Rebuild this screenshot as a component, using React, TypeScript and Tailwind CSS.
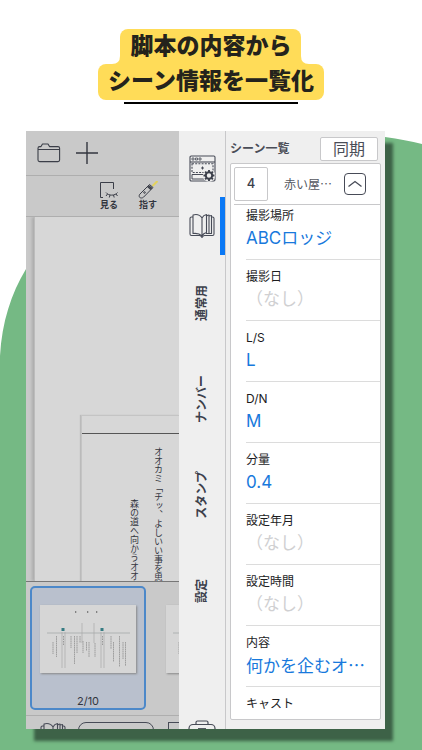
import React from "react";

type Scene = { label: string; value?: string };

const scenes: Scene[] = [
  { label: "撮影場所", value: "ABCロッジ" },
  { label: "撮影日" },
  { label: "L/S", value: "L" },
  { label: "D/N", value: "M" },
  { label: "分量", value: "0.4" },
  { label: "設定年月" },
  { label: "設定時間" },
  { label: "内容", value: "何かを企むオ…" },
];

const tabs = ["通常用", "ナンバー", "スタンプ", "設定"];

function Blob() {
  return (
    <svg
      className="absolute inset-0 h-full w-full"
      viewBox="0 0 422 750"
      preserveAspectRatio="none"
      aria-hidden="true"
    >
      <path
        d="M0 356C2 322 11 294 26 269C50 228 80 200 130 175C230 128 330 126 385 137C399 139 411 141 422 144V750H0Z"
        fill="#75b984"
      />
    </svg>
  );
}

function FolderIcon() {
  return (
    <svg width="24" height="20" viewBox="0 0 24 20" fill="none" stroke="#3b3e48" strokeWidth="1.1" strokeLinejoin="round">
      <path d="M1 6.500V17a1.600 1.600 0 0 0 1.600 1.600H21a1.600 1.600 0 0 0 1.600-1.600V5.200A1.600 1.600 0 0 0 21 3.600H12.500L11 1H5.500L4 3.600H2.600A1.600 1.600 0 0 0 1 5.200V6.500H22.600" />
    </svg>
  );
}

function PlusIcon() {
  return (
    <svg width="22" height="22" viewBox="0 0 22 22" stroke="#33363f" strokeWidth="1.400">
      <path d="M0 11H22M11 0V22" />
    </svg>
  );
}

function LookIcon() {
  return (
    <svg width="20" height="18" viewBox="0 0 20 18" fill="none" stroke="#3b3e48" strokeWidth="1">
      <path d="M4 16.500H1.500V1.500H14.500V8" />
      <path d="M7 11.500C9.500 15 16 15 18.500 11.500M8.500 13L7 15M11 14L10.300 16.500M14.500 14L15.200 16.500M17 13L18.500 15" />
    </svg>
  );
}

function PointerIcon() {
  return (
    <svg width="20" height="18" viewBox="0 0 20 18" fill="none" stroke="#3b3e48" strokeWidth="1">
      <path d="M14.500 5L19.500 0" stroke="#e3d25c" strokeWidth="2" />
      <path d="M11.500 3.500L15 6.500L5.500 16.200C4.500 17.200 2.500 17.200 1.700 16.400C.9 15.500 1 14 2 13Z" />
      <path d="M9.500 5.500L13 8.500M10.500 4.500L14 7.500" strokeWidth="1.300" />
      <circle cx="6.500" cy="11.500" r=".8" />
    </svg>
  );
}

function WindowGearIcon() {
  return (
    <svg width="27" height="27" viewBox="0 0 27 27" fill="none" stroke="#474b57" strokeWidth="1.100">
      <rect x="1" y="1" width="25" height="25" rx="1.200" />
      <path d="M1 7H26" />
      <path d="M3 3h2v2h-2zM6.500 3h2v2h-2zM10 3h2v2h-2z" strokeWidth=".8" />
      <path d="M3 8.800H24V17.500H3Z" strokeDasharray="2 1.200" />
      <path d="M13.500 11.500V14.500M12 13H15" strokeWidth="1" />
      <path d="M3 19.500H14M3 19.500V24H15" strokeWidth="1" />
      <circle cx="20" cy="20.500" r="6.200" fill="#efefef" stroke="none" />
      <circle cx="20" cy="20.500" r="3.200" strokeWidth="2" stroke="#3c404b" />
      <path
        d="M20 15V17M20 24V26M14.500 20.500H16.500M23.500 20.500H25.500M16.100 16.600L17.500 18M22.500 23L23.900 24.400M16.100 24.400L17.500 23M22.500 18L23.900 16.600"
        strokeWidth="1.900"
        stroke="#3c404b"
      />
    </svg>
  );
}

function BookIcon() {
  return (
    <svg
      className="shrink-0"
      width="26"
      height="26"
      viewBox="0 0 26 26"
      fill="none"
      stroke="#474b57"
      strokeWidth="1.100"
      strokeLinejoin="round"
    >
      <path d="M4 4H2.500Q1 4 1 5.500V21Q1 22.500 2.500 22.500H10.500Q12 22.500 13 24.500Q14 22.500 15.500 22.500H23.500Q25 22.500 25 21V5.500Q25 4 23.500 4H22.500" />
      <path d="M13 5C11 2 7.500 1 4 2V20.500C7.500 20 10.500 20.500 13 23V5C14 3 15 2 17.500 1.500V19.500C15.500 20 14 21 13 23" />
      <path d="M17.500 3Q19 2 20 2V20.500H17M20 3Q21.500 2.500 22.500 2.500V20.500H20" />
    </svg>
  );
}

function CaseIcon() {
  return (
    <svg width="28" height="24" viewBox="0 0 28 24" fill="none" stroke="#474b57" strokeWidth="1.200">
      <path d="M8 4.500V2.500Q8 1 9.500 1H18.500Q20 1 20 2.500V4.500" />
      <rect x="1" y="4.500" width="26" height="18" rx="4" />
      <path d="M10 9H18" strokeWidth="1.800" />
    </svg>
  );
}

function ScriptThumb() {
  return (
    <svg className="block h-[68px] w-24 shrink-0 bg-[#d6d6d6] shadow-[1px_1px_2px_#888]" viewBox="0 0 96 68" fill="none">
      <path d="M7 28H90" stroke="#a5a9a9" strokeWidth=".8" />
      <path d="M35 7h1.300M47 7h1.300M56 7h1.300" stroke="#666" strokeWidth="1.300" />
      <path d="M42 18V38M54 18V38M22 27V63M25 27V63M61 27V63M64 27V63" stroke="#aaa" strokeWidth=".7" />
      <path d="M23.500 31V41M62.500 31V41" stroke="#999" strokeDasharray="1.500 1" />
      <path
        d="M13 37V49M16.500 31V52M31 31V43M34.500 31V59M37 31V48M40 31V38M43 36V48M46.500 37V46M49 37V52M55 38V52M71 31V44M73.500 37V57M79.500 31V62M83 37V54M85.500 37V61"
        stroke="#909090"
        strokeWidth=".8"
        strokeDasharray="1.700 .5"
      />
      <path d="M21.500 23h3v3h-3zM60.500 23h3v3h-3z" fill="#357b82" />
    </svg>
  );
}

function Title() {
  return (
    <header className="relative flex flex-col items-center pt-[29px] text-[23px] leading-[35px] font-black text-[#24231c]">
      <h1 className="flex flex-col items-center">
        <span className="flex items-end">
          <svg width="8" height="8" viewBox="0 0 8 8" aria-hidden="true">
            <path d="M8 0V8H0Q8 8 8 0Z" fill="#ffdc58" />
          </svg>
          <span className="rounded-t-lg bg-[#ffdc58] px-[10px]">脚本の内容から</span>
          <svg width="8" height="8" viewBox="0 0 8 8" aria-hidden="true">
            <path d="M0 0V8H8Q0 8 0 0Z" fill="#ffdc58" />
          </svg>
        </span>
        <span className="rounded-lg bg-[#ffdc58] px-[10px] pb-px">シーン情報を一覧化</span>
      </h1>
      <div className="mt-[2px] h-[2px] w-[174px] bg-black" />
    </header>
  );
}

function Editor() {
  return (
    <section className="flex w-[153px] shrink-0 flex-col overflow-hidden bg-[#c9c9c9] text-[#33363f]">
      <div className="flex h-[45px] shrink-0 items-center gap-[15px] border-b border-[#aeaeae] px-[11px]">
        <button type="button" aria-label="フォルダ">
          <FolderIcon />
        </button>
        <button type="button" aria-label="追加">
          <PlusIcon />
        </button>
      </div>
      <div className="flex h-[41px] shrink-0 justify-end gap-[19px] border-b border-[#aeaeae] pt-[5px] pr-[21px] text-[9px] leading-[12px] font-bold">
        <button type="button" className="flex w-5 flex-col items-center whitespace-nowrap">
          <LookIcon />
          見る
        </button>
        <button type="button" className="flex w-5 flex-col items-center whitespace-nowrap">
          <PointerIcon />
          指す
        </button>
      </div>
      <div className="min-h-0 flex-1 overflow-hidden pl-2">
        <div className="flex h-full items-end border-l border-[#bcbcbc] bg-[#d7d7d7] pt-[198px] pl-[46px] shadow-[-2px_0_3px_#aaa]">
          <article className="h-full flex-1 border-t border-l border-[#c4c4c4] pt-[17px] shadow-[-1px_0_1px_#bbb]">
            <div className="flex h-full flex-row-reverse items-start gap-[12px] overflow-hidden border-t border-[#555] pt-[13px] pr-[15px] text-[9px] leading-[12px] whitespace-nowrap">
              <p className="[writing-mode:vertical-rl]">オオカミ「チッ、よしいい事を思い</p>
              <p className="pt-[52px] [writing-mode:vertical-rl]">森の道へ向かうオオカミ</p>
            </div>
          </article>
        </div>
      </div>
      <div className="flex h-[135px] shrink-0 gap-5 border-t border-b border-t-[#777] border-b-[#aeaeae] pt-1 pl-1">
        <button
          type="button"
          className="flex h-[124px] w-[116px] shrink-0 flex-col items-center justify-between rounded-[5px] border-2 border-[#4c88c9] bg-[#b9c0cd] pt-[17px] text-[11px] leading-[14px]"
        >
          <ScriptThumb />
          2/10
        </button>
        <div className="pt-[19px]">
          <ScriptThumb />
        </div>
      </div>
      <div className="flex h-[13px] shrink-0 items-start gap-3 overflow-hidden pt-[6px] pl-[14px]">
        <BookIcon />
        <button type="button" aria-label="ページ" className="h-6 w-[76px] shrink-0 rounded-lg border border-[#474b57]" />
        <span className="ml-[2px] h-6 w-5 shrink-0 border border-[#474b57]" />
      </div>
    </section>
  );
}

function Tabs() {
  return (
    <nav className="flex w-[47px] shrink-0 flex-col overflow-hidden border-r border-[#c8c8ca] bg-[#efefef] pt-2 text-[#3c404b]">
      <button type="button" aria-label="表示設定" className="flex h-[58px] shrink-0 items-center justify-center">
        <WindowGearIcon />
      </button>
      <button
        type="button"
        aria-label="シーン"
        className="flex h-[58px] shrink-0 items-center justify-center border-r-[5px] border-[#0a78f5] pl-[5px]"
      >
        <BookIcon />
      </button>
      {tabs.map((t) => (
        <button
          key={t}
          type="button"
          className="flex h-24 shrink-0 items-center justify-center text-[12px] leading-[16px] font-bold"
        >
          <span className="rotate-180 whitespace-nowrap [text-orientation:sideways] [writing-mode:vertical-rl]">{t}</span>
        </button>
      ))}
      <button type="button" aria-label="ツール" className="mt-[81px] flex shrink-0 justify-center">
        <CaseIcon />
      </button>
    </nav>
  );
}

function SceneRow({ label, value }: Scene) {
  return (
    <div className="h-[61px] border-b border-[#dcdcdc] pt-[9px]">
      <dt className="text-[12px] leading-[16px] text-[#1c1c1e]">{label}</dt>
      <dd
        className={
          "mt-[2px] text-[17px] leading-[24px] whitespace-nowrap " + (value ? "text-[#1879dc]" : "text-[#d0d0d2]")
        }
      >
        {value?.endsWith("…") ? <span className="font-['Noto_Sans_CJK_JP',sans-serif]">{value}</span> : value ?? "（なし）"}
      </dd>
    </div>
  );
}

function ScenePanel() {
  return (
    <section className="flex min-w-0 flex-1 flex-col bg-[#efefef] px-1 pb-[9px]">
      <div className="flex h-8 shrink-0 items-center justify-between pt-1 pr-[3px]">
        <h2 className="text-[12px] leading-[16px] font-bold text-[#4a4d57]">シーン一覧</h2>
        <button
          type="button"
          className="h-6 w-[58px] rounded-[2px] border border-[#c8c8ca] bg-white text-[16px] leading-[20px] text-[#4a4d57]"
        >
          同期
        </button>
      </div>
      <div className="flex min-h-0 flex-1 flex-col rounded-[2px] border border-[#c8c8ca] bg-white">
        <div className="ml-[3px] flex h-[41px] shrink-0 items-center border-b border-[#c8c8ca]">
          <span className="flex h-[34px] w-[34px] shrink-0 items-center justify-center rounded-[2px] border border-[#c8c8ca] text-[13px] font-medium text-[#3c404b]">
            4
          </span>
          <span className="ml-4 flex-1 font-['Noto_Sans_CJK_JP',sans-serif] text-[12px] leading-[16px] whitespace-nowrap text-[#55575f]">
            赤い屋…
          </span>
          <button
            type="button"
            aria-label="閉じる"
            className="mr-[14px] flex h-[22px] w-[22px] items-center justify-center rounded-[4px] border border-[#474b57]"
          >
            <svg width="14" height="8" viewBox="0 0 14 8" fill="none" stroke="#474b57" strokeWidth="1.300">
              <path d="M.5 6.500L7 1.500L13.500 6.500" />
            </svg>
          </button>
        </div>
        <div className="min-h-0 flex-1 overflow-hidden pl-[15px]">
          <dl className="-mt-1.5">
            {scenes.map((s) => (
              <SceneRow key={s.label} {...s} />
            ))}
            <div className="pt-[9px]">
              <dt className="text-[12px] leading-[16px] text-[#1c1c1e]">キャスト</dt>
            </div>
          </dl>
        </div>
      </div>
    </section>
  );
}

export default function App() {
  return (
    <div
      lang="ja"
      className="relative flex h-screen flex-col overflow-hidden bg-white font-['Inter','Noto_Sans_CJK_JP',sans-serif]"
    >
      <Blob />
      <Title />
      <main className="relative mt-[27px] mr-[37px] mb-[21px] ml-[26px] flex min-h-0 flex-1 shadow-[8px_12px_3px_#3d6247]">
        <Editor />
        <Tabs />
        <ScenePanel />
      </main>
    </div>
  );
}
